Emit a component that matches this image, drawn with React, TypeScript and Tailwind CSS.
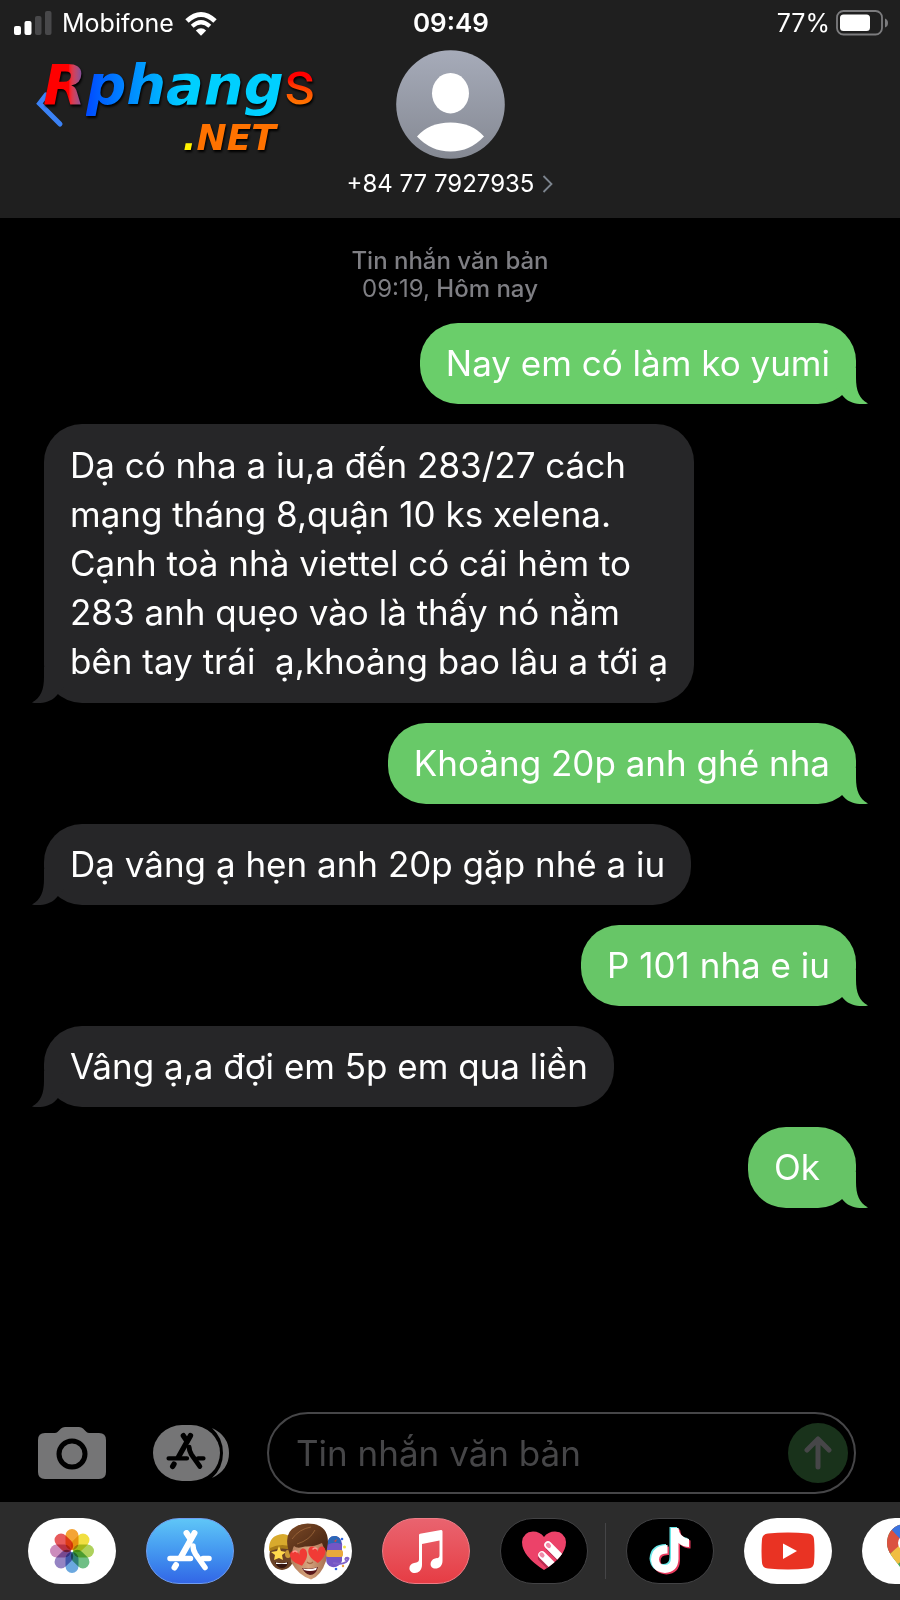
import type { ReactNode } from "react";

type Message = { from: "me" | "them"; text: string; tone?: string };

const messages: Message[] = [
  { from: "me", text: "Nay em có làm ko yumi", tone: "text-[#6ace6a]" },
  {
    from: "them",
    text:
      "Dạ có nha a iu,a đến 283/27 cách\nmạng tháng 8,quận 10 ks xelena.\nCạnh toà nhà viettel có cái hẻm to\n283 anh quẹo vào là thấy nó nằm\nbên tay trái  ạ,khoảng bao lâu a tới ạ",
  },
  { from: "me", text: "Khoảng 20p anh ghé nha", tone: "text-[#68c968]" },
  { from: "them", text: "Dạ vâng ạ hẹn anh 20p gặp nhé a iu" },
  { from: "me", text: "P 101 nha e iu", tone: "text-[#67c667]" },
  { from: "them", text: "Vâng ạ,a đợi em 5p em qua liền" },
  { from: "me", text: "Ok", tone: "text-[#66c466]" },
];

function Bubble({ message }: { message: Message }) {
  const mine = message.from === "me";
  const long = message.text.includes("\n");
  return (
    <li
      className={`relative w-fit min-w-[108px] rounded-[38px] bg-current px-[26px] ${long ? "py-[17px]" : "py-4"} ${
        mine ? `self-end ${message.tone}` : "self-start text-[#262628]"
      }`}
    >
      <svg
        aria-hidden="true"
        viewBox="0 0 32 36"
        className={`absolute bottom-0 h-9 w-8 ${mine ? "-right-3" : "-left-3 -scale-x-100"}`}
      >
        <path d="M20 0V10C20 22 23 31 32 35.4C23 37.4 12 35 6.5 27.5L0 20V0Z" fill="currentColor" />
      </svg>
      <p className="relative text-[35px] leading-[49px] whitespace-pre text-white">{message.text}</p>
    </li>
  );
}

function StatusBar() {
  return (
    <div className="grid h-[46px] grid-cols-3 items-center pr-3 pl-3.5 text-[25px] leading-8">
      <div className="flex items-center gap-2.5">
        <svg aria-label="Signal" viewBox="0 0 38 24" className="h-6 w-[38px]">
          <rect x="0" y="15" width="7" height="9" rx="2" fill="#fff" />
          <rect x="10.5" y="10" width="7" height="14" rx="2" fill="#fff" />
          <rect x="21" y="5" width="6.5" height="19" rx="2" fill="#48484a" />
          <rect x="31" y="0" width="6.5" height="24" rx="2" fill="#48484a" />
        </svg>
        <span>Mobifone</span>
        <svg aria-label="Wi-Fi" viewBox="0 0 34 25" className="h-[25px] w-[34px]">
          <path d="M3 10Q17-3 31 10" fill="none" stroke="#fff" strokeWidth="5" />
          <path d="M8.2 15.3Q17 7.2 25.8 15.3" fill="none" stroke="#fff" strokeWidth="4.2" />
          <path d="M11.8 19.5Q17 15 22.2 19.5L17 24.8Z" fill="#fff" />
        </svg>
      </div>
      <time className="text-center text-[26px] font-semibold">09:49</time>
      <div className="flex items-center justify-end gap-1.5">
        <span>77%</span>
        <svg aria-label="Battery" viewBox="0 0 52 26" className="h-[26px] w-[52px]">
          <rect x="1" y="1" width="45" height="23.5" rx="6.5" fill="none" stroke="#7c7c7e" strokeWidth="1.8" />
          <rect x="4" y="4.5" width="30" height="16.5" rx="3.5" fill="#fff" />
          <path d="M49 8.5Q52 9.5 52 13T49 17.5Z" fill="#7c7c7e" />
        </svg>
      </div>
    </div>
  );
}

function BrandLogo() {
  return (
    <div className="relative flex w-fit flex-col font-['DejaVu_Sans'] font-bold whitespace-nowrap italic drop-shadow-[1px_2px_1px_#000]">
      <div className="flex items-baseline text-[56px] leading-[66px]">
        <span className="bg-linear-to-r from-[#ff0000] from-60% to-[#5a45b8] bg-clip-text text-transparent">R</span>
        <span className="bg-linear-to-r from-[#0048ff] via-[#00cfff] via-50% to-[#00cfff] bg-clip-text pr-1 text-transparent">
          phang
        </span>
        <span className="-ml-1 bg-linear-to-b from-[#ff0000] from-45% to-[#ff7a00] to-85% bg-clip-text font-[Roboto] text-[62px] font-normal text-transparent not-italic">
          s
        </span>
      </div>
      <div className="mr-10 self-end text-[36px] leading-10">
        <span className="text-[#fff200]">.</span>
        <span className="text-[#ff7200]">NET</span>
      </div>
    </div>
  );
}

function Header() {
  return (
    <header className="h-[218px] bg-[#1f1f1f] text-white">
      <StatusBar />
      <div className="grid grid-cols-[1fr_auto_1fr]">
        <div className="relative pt-1 pl-[43px]">
          <button type="button" aria-label="Back" className="absolute top-[34px] left-9 text-[#3b82f6]">
            <svg viewBox="0 0 28 50" className="h-[50px] w-7">
              <path d="M10 15L3.5 23.5L24 44" fill="none" stroke="currentColor" strokeWidth="5" strokeLinecap="round" />
            </svg>
          </button>
          <BrandLogo />
        </div>
        <button type="button" className="flex flex-col items-center pt-1">
          <svg aria-hidden="true" viewBox="0 0 109 109" className="size-[109px]">
            <defs>
              <linearGradient id="avatar" x1="0" y1="0" x2="0" y2="1">
                <stop offset="0" stopColor="#a6abb9" />
                <stop offset="1" stopColor="#858993" />
              </linearGradient>
            </defs>
            <circle cx="54.5" cy="54.5" r="54.3" fill="url(#avatar)" />
            <ellipse cx="54.5" cy="43.2" rx="18.5" ry="20.2" fill="#fff" />
            <path d="M21 86.5Q33 72.5 54.5 72.5T88 86.5Q74 101.5 54.5 101.5T21 86.5Z" fill="#fff" />
          </svg>
          <span className="mt-[9px] flex items-center gap-2 text-[24px] leading-8">
            +84 77 7927935
            <svg aria-hidden="true" viewBox="0 0 11 18" className="h-[18px] w-[11px]">
              <path d="M1.5 1L9.5 9L1.5 17" fill="none" stroke="#7d858f" strokeWidth="1.8" />
            </svg>
          </span>
        </button>
      </div>
    </header>
  );
}

function Composer() {
  return (
    <form className="flex items-center pr-11 pb-2 pl-[38px]" onSubmit={(e) => e.preventDefault()}>
      <button type="button" aria-label="Camera" className="mr-[47px]">
        <svg viewBox="0 0 68 54" className="h-[54px] w-[68px]">
          <path
            d="M7 7H17Q19 7 20.5 5L23 2.500Q24.500 1 27 1H41Q43.500 1 45 2.500L47.500 5Q49 7 51 7H61Q68 7 68 14V46Q68 53 61 53H7Q0 53 0 46V14Q0 7 7 7Z"
            fill="#757576"
          />
          <circle cx="34" cy="28" r="13" fill="none" stroke="#000" strokeWidth="5" />
        </svg>
      </button>
      <button type="button" aria-label="Apps" className="mr-[38px]">
        <svg viewBox="0 0 76 56" className="h-14 w-[76px]">
          <path d="M59 3Q76 11 76 28T59 53Q70 43 70 28T59 3Z" fill="#757576" />
          <rect width="67" height="56" rx="29" ry="28" fill="#757576" />
          <g transform="translate(13 8) scale(.89)" stroke="#000" strokeWidth="5" strokeLinecap="round" fill="none">
            <AppStoreStrokes />
          </g>
        </svg>
      </button>
      <div className="flex h-[82px] min-w-0 flex-1 items-center rounded-full border-2 border-[#464648] pr-1.5 pl-[27px]">
        <input
          aria-label="Tin nhắn văn bản"
          placeholder="Tin nhắn văn bản"
          className="min-w-0 flex-1 bg-transparent text-[35px] leading-[50px] text-white outline-none placeholder:text-[#464648]"
        />
        <button
          type="submit"
          aria-label="Send"
          className="flex size-[60px] items-center justify-center rounded-full bg-[#19321b]"
        >
          <svg viewBox="0 0 28 34" className="h-[34px] w-7">
            <path
              d="M14 31V4M3 14L14 3L25 14"
              fill="none"
              stroke="#464648"
              strokeWidth="5"
              strokeLinecap="round"
              strokeLinejoin="round"
            />
          </svg>
        </button>
      </div>
    </form>
  );
}

function AppStoreStrokes() {
  return (
    <>
      <path d="M27.500 3L14 27" strokeWidth="6" />
      <path d="M19.500 3L23.500 9" strokeWidth="6" />
      <path d="M26 16Q26 20 28.500 24L38 37.500" strokeWidth="5.500" />
      <path d="M9 35L7.500 37.500" strokeWidth="6" />
      <path d="M3 28.500H23.500M36 28.500H42" />
    </>
  );
}

function DockApp({ label, tone, children }: { label: string; tone: string; children: ReactNode }) {
  return (
    <button
      type="button"
      aria-label={label}
      className={`flex h-[66px] w-[88px] shrink-0 items-center justify-center overflow-hidden rounded-full ${tone}`}
    >
      {children}
    </button>
  );
}

const petals = ["#f39a1f", "#f0dc2c", "#a5cc4a", "#5fb878", "#5b9fdc", "#8a76bd", "#c77fb5", "#e5484a"];

function PhotosIcon() {
  return (
    <svg viewBox="-23 -23 46 46" className="size-[46px]">
      {petals.map((color, i) => (
        <rect
          key={color}
          x="-6.5"
          y="-22"
          width="13"
          height="21"
          rx="6.5"
          fill={color}
          transform={`rotate(${i * 45})`}
          className="opacity-90 mix-blend-multiply"
        />
      ))}
    </svg>
  );
}

function MemojiIcon() {
  const heart = "M0 4C-2-3-11-3-10 5C-9 11-2 14 1 16C4 13 9 8 8 2C7-4 0-3 0 4Z";
  return (
    <svg viewBox="0 0 88 66" className="h-[66px] w-[88px]">
      <defs>
        <linearGradient id="hair" x1="0" y1="0" x2="1" y2="1">
          <stop offset="0" stopColor="#7d4a26" />
          <stop offset="1" stopColor="#3f2010" />
        </linearGradient>
        <linearGradient id="face" x1="0" y1="0" x2="1" y2="0">
          <stop offset="0" stopColor="#b07a58" />
          <stop offset=".5" stopColor="#d6a47e" />
          <stop offset="1" stopColor="#a66d4d" />
        </linearGradient>
      </defs>
      <ellipse cx="18" cy="37" rx="12.500" ry="15" fill="#6b4226" />
      <path d="M5 33Q4 17 19 16Q31 17 31 33Q18 26 5 33Z" fill="#d8aa2d" />
      <path d="M6 30Q18 24 31 30V33Q18 28 6 33Z" fill="#a87b18" />
      <path d="M15 28L17 33L22 34L18 37L19 42L15 40L10 42L11 37L7 34L13 33Z" fill="#ffd94d" />
      <ellipse cx="24" cy="36" rx="3" ry="4" fill="#c99a35" />
      <path d="M11 44Q18 46 24 44Q23 50 18 50T11 44Z" fill="#34150f" />
      <path d="M12 44.500Q18 46 23 44.500V46H12Z" fill="#fff" />
      <path d="M63 27Q64 17 72 18Q79 20 78 30V43Q75 50 68 49Q62 48 62 40Z" fill="#7356c5" />
      <path d="M63 27Q64 17 72 18Q77 19 77 26Q70 23 63 27Z" fill="#2b67b8" />
      <path d="M67 22L70 23L73 21L72 24Z" fill="#e0423d" />
      <rect x="62" y="32" width="17" height="7" rx="2" fill="#e9a93c" />
      <path d="M69 45Q78 47 82 44Q87 39 82 40Q80 42 84 43" fill="none" stroke="#8063c8" strokeWidth="2" />
      <circle cx="78" cy="21" r="1.300" fill="#3068e0" />
      <circle cx="80.500" cy="29" r="1.500" fill="#f2e34c" />
      <circle cx="72" cy="51" r="1.300" fill="#3068e0" />
      <circle cx="79" cy="48" r="1.200" fill="#ea9b3b" />
      <path d="M26 27Q26 14 45 14Q63 14 63 28L62 43Q57 58 47 61.500Q34 57 27 44Z" fill="url(#face)" />
      <path
        d="M26 37Q18 15 32 8.500Q39 4 50 6Q64 9 64 24L62.500 34Q59 29 58 25Q50 29 41 28.500Q33 31 30 28Q28 31 28 38Z"
        fill="url(#hair)"
      />
      <path d="M28 21Q35 11 47 9M33 26Q46 22 51 12" stroke="#a06a3c" strokeWidth=".8" fill="none" />
      <path d={heart} transform="translate(35 33) rotate(-8) scale(.94)" fill="#f03b35" />
      <path d={heart} transform="translate(54 30) rotate(4) scale(.94)" fill="#f03b35" />
      <path d="M29 34Q31 32 33 34M49 31Q51 29 53 31" stroke="#ff9a92" strokeWidth="1.500" fill="none" strokeLinecap="round" />
      <path d="M43 44Q46 47 49 44" stroke="#a66846" strokeWidth="1.200" fill="none" />
      <path d="M38 50Q46 52 54 49Q52 57 46 57Q41 56 38 50Z" fill="#58161a" />
      <path d="M39 50.500Q46 52 53 49.500L52 52Q46 54 40 52Z" fill="#fff" />
    </svg>
  );
}

const note =
  "M24 2H31.500Q32 11 42 13V21Q36 21 31.500 17V33Q31 46 18 47Q5 46 4 33.500Q5 19 20.500 19V27.500Q12 27 12 33.500Q12.500 39 18 39Q24 39 24 32Z";

function Dock() {
  return (
    <nav aria-label="iMessage apps" className="flex h-[98px] items-center overflow-hidden bg-[#2c2c2c] pl-7">
      <div className="flex gap-[30px]">
        <DockApp label="Photos" tone="bg-white">
          <PhotosIcon />
        </DockApp>
        <DockApp label="App Store" tone="bg-linear-to-b from-[#5fc6f7] to-[#3366e6] border border-[#6f9df0]">
          <svg viewBox="0 0 46 42" className="h-[42px] w-[46px]" stroke="#fff" strokeWidth="5.500" strokeLinecap="round" fill="none">
            <AppStoreStrokes />
          </svg>
        </DockApp>
        <DockApp label="Memoji" tone="bg-white">
          <MemojiIcon />
        </DockApp>
        <DockApp label="Music" tone="bg-linear-to-b from-[#e9636f] to-[#e63c44] border border-[#ee7c86]">
          <svg viewBox="0 0 36 44" className="h-11 w-9" fill="#fff">
            <path d="M11 6Q11 5 12 4.700L33 1Q34.500 .8 34.500 2.500V32C34.500 37 31 39.500 27.500 39.500C21 39.500 21 31 27 29.500C30 29 31.500 29 31.500 26V11.500L14 15V36C14 41 10.500 44 7 44C0 44-.5 35.500 6 34C9.500 33.300 11 33 11 30Z" />
          </svg>
        </DockApp>
        <DockApp label="Digital Touch" tone="bg-black border border-[#424244]">
          <svg viewBox="0 0 44 40" className="h-10 w-11">
            <defs>
              <clipPath id="heart">
                <path d="M22 39Q0 25 0 11Q1 1 11 .5Q18 .5 22 6Q26 .5 33 .5Q43 1 44 11Q44 25 22 39Z" />
              </clipPath>
            </defs>
            <g clipPath="url(#heart)">
              <rect width="44" height="40" fill="#ec4269" />
              <g strokeLinecap="round" fill="none">
                <path d="M20 27L34 41M28 17L44 33" stroke="#b72c50" strokeWidth="8" />
                <path d="M20 24L36 40M26 14L44 32" stroke="#fff" strokeWidth="7.500" />
              </g>
              <ellipse cx="20" cy="24" rx="2.800" ry="2.200" transform="rotate(45 20 24)" fill="#f08aa8" />
              <ellipse cx="26.500" cy="14.500" rx="2.800" ry="2.200" transform="rotate(45 26.500 14.500)" fill="#f08aa8" />
            </g>
          </svg>
        </DockApp>
      </div>
      <div className="mr-5 ml-[17px] h-14 w-px shrink-0 bg-[#454547]" />
      <div className="flex gap-[30px]">
        <DockApp label="TikTok" tone="bg-black border border-[#424244]">
          <svg viewBox="0 0 46 50" className="h-[50px] w-[46px]">
            <path d={note} fill="#69e8e8" transform="translate(-1.500 -1)" />
            <path d={note} fill="#e8395c" transform="translate(1.500 1.500)" />
            <path d={note} fill="#fff" />
          </svg>
        </DockApp>
        <DockApp label="YouTube" tone="bg-white">
          <svg viewBox="0 0 54 38" className="h-[38px] w-[54px]">
            <path d="M7 1.500Q27-.5 47 1.500Q52.500 2 53 7Q54 19 53 31Q52.500 36 47 36.500Q27 38.500 7 36.500Q1.500 36 1 31Q0 19 1 7Q1.500 2 7 1.500Z" fill="#e93323" />
            <path d="M22 11.500L36 19L22 27Z" fill="#fff" />
          </svg>
        </DockApp>
        <DockApp label="Google Maps" tone="bg-white">
          <svg viewBox="0 0 40 56" className="h-14 w-10">
            <defs>
              <clipPath id="pin">
                <path d="M20 1C9 1 1 9 1 20C1 33 14 39 20 55C26 39 39 33 39 20C39 9 31 1 20 1Z" />
              </clipPath>
            </defs>
            <g clipPath="url(#pin)">
              <rect width="40" height="56" fill="#4ca65b" />
              <path d="M0 36L30 0L40 16L12 41Z" fill="#f0be42" />
              <path d="M0 0H12L20 17L0 34Z" fill="#db5140" />
              <path d="M4 5L18 20L40 0H4Z" fill="#3b74e0" />
              <path d="M40 0V22L28 20Z" fill="#71a6f2" />
            </g>
            <circle cx="20" cy="20" r="8" fill="#fff" />
          </svg>
        </DockApp>
      </div>
    </nav>
  );
}

export default function App() {
  return (
    <div className="flex min-h-screen flex-col overflow-hidden bg-black font-[Inter,'Noto_Sans',sans-serif] text-white">
      <Header />
      <main className="flex flex-1 flex-col px-11 pt-[29px]">
        <p className="text-center text-[24px] leading-7 font-medium text-[#7f7f84]">
          Tin nhắn văn bản
          <br />
          <span className="font-normal">09:19,</span> Hôm nay
        </p>
        <ul className="mt-5 flex flex-col gap-5">
          {messages.map((message) => (
            <Bubble key={message.text} message={message} />
          ))}
        </ul>
      </main>
      <Composer />
      <Dock />
    </div>
  );
}
